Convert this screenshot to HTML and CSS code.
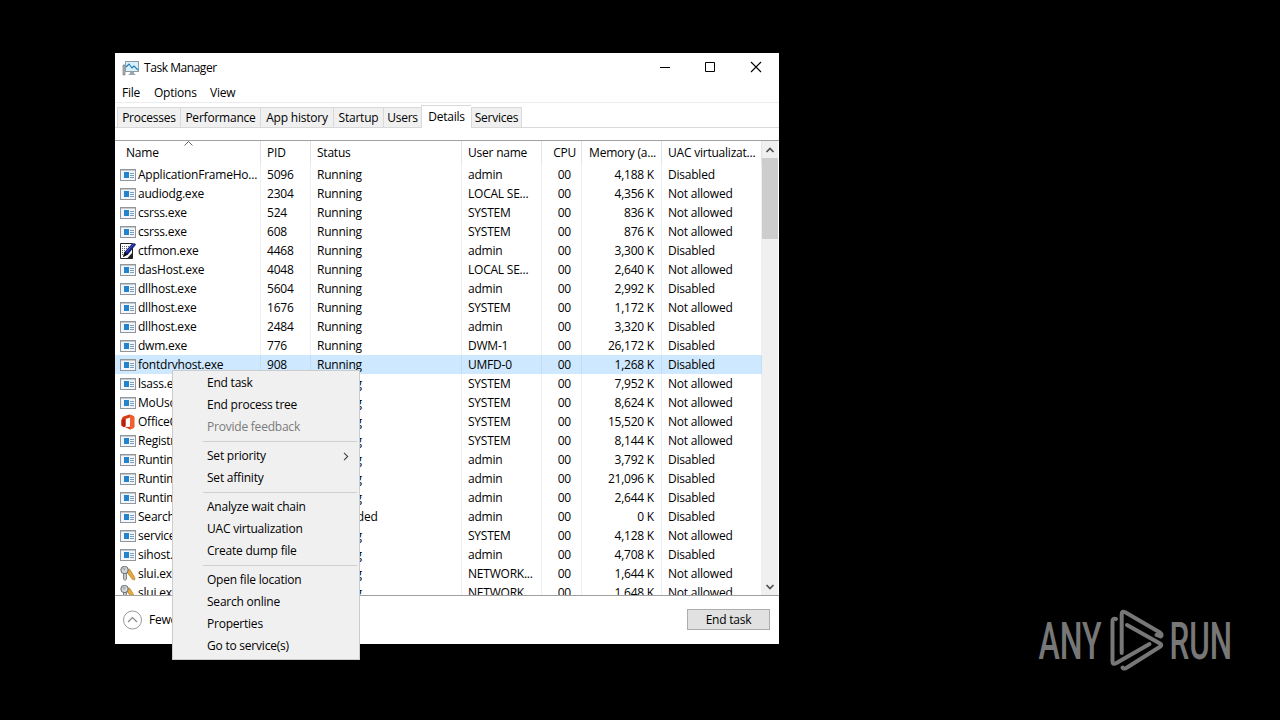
FILE: index.html
```html
<!DOCTYPE html>
<html lang="en">
<head>
<meta charset="utf-8">
<title>Task Manager</title>
<link rel="stylesheet" href="styles.css">
</head>
<body>
<svg class="defs" width="0" height="0">
  <symbol id="exe" viewBox="0 0 16 16">
    <rect x=".5" y="2.500" width="15" height="11" fill="#f2f6fa" stroke="#8f969c"/>
    <rect x="1" y="3" width="14" height="1" fill="#c4cad0"/>
    <rect x="4" y="5" width="5" height="6" fill="#2583cb"/>
    <path d="M10 6.500h4M10 8.500h4M10 10.500h4" stroke="#7d9fbd"/>
  </symbol>
  <symbol id="pen" viewBox="0 0 16 16">
    <path d="M.5.500h12v15H.5z" fill="#fff" stroke="#222"/>
    <path d="M2 3.500h9M2 5.500h9M2 7.500h7M2 9.500h5M2 11.500h3" stroke="#666" stroke-dasharray="1 1"/>
    <path d="M3 14l1.500-5L12 .8q2.500-1.300 4 .7L8 11.500z" fill="#12207f"/>
    <path d="M3 14l1.500-5 3.500 2.500z" fill="#111"/><path d="M6.500 9L13.500 1.500" stroke="#4c65d1"/>
    <path d="M7 15.500l5.500-6v6z" fill="#222"/>
  </symbol>
  <symbol id="office" viewBox="0 0 16 16">
    <path d="M9.500.5L3.500 2.500Q1.500 3.500 1.500 6v5.500l2.500 1.700 1.500-1V5L10 3.500v9.300l-5 .3 5 2.400 3.500-1.500q.8-.5.8-1.500V3.500q0-1-.8-1.500z" fill="#dc3a12"/>
    <path d="M10 .7l3.500 1.500q.8.4.8 1.400v9q0 1-.8 1.400L10 15.500z" fill="#f0602e"/>
    <path d="M1.500 6v5.500l2.500 1.700 1.500-1V5z" fill="#b8200b"/>
  </symbol>
  <symbol id="keys" viewBox="0 0 16 16">
    <path d="M7 2.500l3 1 5 8.500-.5 2-2-.5L7.500 7z" fill="#e5a83a" stroke="#a87524" stroke-width=".6"/>
    <circle cx="4.500" cy="4" r="3.700" fill="#d5d8da" stroke="#656b70"/>
    <circle cx="4" cy="3" r="1" fill="#fff" stroke="#656b70" stroke-width=".6"/>
    <path d="M3.500 7.500h3v5.500L5 14.500 3.500 13z" fill="#c5c9cc" stroke="#656b70" stroke-width=".8"/>
  </symbol>
</svg>

<main class="window">
  <header class="titlebar">
    <svg class="app-icon" width="17" height="16" viewBox="0 0 17 16">
      <path d="M1 5h2v10H1z" fill="#b6bcc1" stroke="#70777d" stroke-width=".7"/>
      <rect x="3.500" y="1.500" width="13" height="10" fill="#d5effb" stroke="#929ba2"/>
      <path d="M4 7l3-3 3 4 2-2 4 4" fill="none" stroke="#1c7eb5" stroke-width="1.100"/>
      <path d="M8 12h4v1.500l2 1.500H6l2-1.500z" fill="#9ba5ac"/>
    </svg>
    <h1 class="title">Task Manager</h1>
    <svg class="controls" width="138" height="30" viewBox="0 0 138 30">
      <path d="M19 14.500h10M64.500 9.500h9v9h-9z" fill="none" stroke="#000"/>
      <path d="M110 9l10 10M120 9l-10 10" fill="none" stroke="#000" stroke-width="1.100"/>
    </svg>
  </header>
  <nav class="menubar"><span class="mi-file">File</span><span class="mi-options">Options</span><span>View</span></nav>
  <div class="tabs">
    <span class="tab t-processes">Processes</span><span class="tab t-performance">Performance</span><span class="tab t-history">App history</span><span class="tab t-startup">Startup</span><span class="tab t-users">Users</span><span class="tab t-details active">Details</span><span class="tab t-services">Services</span>
  </div>
  <section class="list">
    <div class="table">
      <div class="row head"><span class="name">Name<svg class="sort" width="9" height="5" viewBox="0 0 9 5"><path d="M.5 4.500l4-4 4 4" fill="none" stroke="#555" stroke-width=".9"/></svg></span><span>PID</span><span>Status</span><span>User name</span><span class="num">CPU</span><span class="num">Memory (a...</span><span>UAC virtualizat...</span></div>
      <div class="row"><span class="name"><svg class="icon"><use href="#exe"/></svg>ApplicationFrameHo...</span><span>5096</span><span>Running</span><span>admin</span><span class="num cpu">00</span><span class="num">4,188 K</span><span>Disabled</span></div>
      <div class="row"><span class="name"><svg class="icon"><use href="#exe"/></svg>audiodg.exe</span><span>2304</span><span>Running</span><span>LOCAL SE...</span><span class="num cpu">00</span><span class="num">4,356 K</span><span>Not allowed</span></div>
      <div class="row"><span class="name"><svg class="icon"><use href="#exe"/></svg>csrss.exe</span><span>524</span><span>Running</span><span>SYSTEM</span><span class="num cpu">00</span><span class="num">836 K</span><span>Not allowed</span></div>
      <div class="row"><span class="name"><svg class="icon"><use href="#exe"/></svg>csrss.exe</span><span>608</span><span>Running</span><span>SYSTEM</span><span class="num cpu">00</span><span class="num">876 K</span><span>Not allowed</span></div>
      <div class="row"><span class="name"><svg class="icon"><use href="#pen"/></svg>ctfmon.exe</span><span>4468</span><span>Running</span><span>admin</span><span class="num cpu">00</span><span class="num">3,300 K</span><span>Disabled</span></div>
      <div class="row"><span class="name"><svg class="icon"><use href="#exe"/></svg>dasHost.exe</span><span>4048</span><span>Running</span><span>LOCAL SE...</span><span class="num cpu">00</span><span class="num">2,640 K</span><span>Not allowed</span></div>
      <div class="row"><span class="name"><svg class="icon"><use href="#exe"/></svg>dllhost.exe</span><span>5604</span><span>Running</span><span>admin</span><span class="num cpu">00</span><span class="num">2,992 K</span><span>Disabled</span></div>
      <div class="row"><span class="name"><svg class="icon"><use href="#exe"/></svg>dllhost.exe</span><span>1676</span><span>Running</span><span>SYSTEM</span><span class="num cpu">00</span><span class="num">1,172 K</span><span>Not allowed</span></div>
      <div class="row"><span class="name"><svg class="icon"><use href="#exe"/></svg>dllhost.exe</span><span>2484</span><span>Running</span><span>admin</span><span class="num cpu">00</span><span class="num">3,320 K</span><span>Disabled</span></div>
      <div class="row"><span class="name"><svg class="icon"><use href="#exe"/></svg>dwm.exe</span><span>776</span><span>Running</span><span>DWM-1</span><span class="num cpu">00</span><span class="num">26,172 K</span><span>Disabled</span></div>
      <div class="row selected"><span class="name"><svg class="icon"><use href="#exe"/></svg>fontdrvhost.exe</span><span>908</span><span>Running</span><span>UMFD-0</span><span class="num cpu">00</span><span class="num">1,268 K</span><span>Disabled</span></div>
      <div class="row"><span class="name"><svg class="icon"><use href="#exe"/></svg>lsass.exe</span><span></span><span>Running</span><span>SYSTEM</span><span class="num cpu">00</span><span class="num">7,952 K</span><span>Not allowed</span></div>
      <div class="row"><span class="name"><svg class="icon"><use href="#exe"/></svg>MoUso</span><span></span><span>Running</span><span>SYSTEM</span><span class="num cpu">00</span><span class="num">8,624 K</span><span>Not allowed</span></div>
      <div class="row"><span class="name"><svg class="icon"><use href="#office"/></svg>OfficeC</span><span></span><span>Running</span><span>SYSTEM</span><span class="num cpu">00</span><span class="num">15,520 K</span><span>Not allowed</span></div>
      <div class="row"><span class="name"><svg class="icon"><use href="#exe"/></svg>Registry</span><span></span><span>Running</span><span>SYSTEM</span><span class="num cpu">00</span><span class="num">8,144 K</span><span>Not allowed</span></div>
      <div class="row"><span class="name"><svg class="icon"><use href="#exe"/></svg>Runtime</span><span></span><span>Running</span><span>admin</span><span class="num cpu">00</span><span class="num">3,792 K</span><span>Disabled</span></div>
      <div class="row"><span class="name"><svg class="icon"><use href="#exe"/></svg>Runtime</span><span></span><span>Running</span><span>admin</span><span class="num cpu">00</span><span class="num">21,096 K</span><span>Disabled</span></div>
      <div class="row"><span class="name"><svg class="icon"><use href="#exe"/></svg>Runtime</span><span></span><span>Running</span><span>admin</span><span class="num cpu">00</span><span class="num">2,644 K</span><span>Disabled</span></div>
      <div class="row"><span class="name"><svg class="icon"><use href="#exe"/></svg>Search</span><span></span><span>Suspended</span><span>admin</span><span class="num cpu">00</span><span class="num">0 K</span><span>Disabled</span></div>
      <div class="row"><span class="name"><svg class="icon"><use href="#exe"/></svg>services</span><span></span><span>Running</span><span>SYSTEM</span><span class="num cpu">00</span><span class="num">4,128 K</span><span>Not allowed</span></div>
      <div class="row"><span class="name"><svg class="icon"><use href="#exe"/></svg>sihost.exe</span><span></span><span>Running</span><span>admin</span><span class="num cpu">00</span><span class="num">4,708 K</span><span>Disabled</span></div>
      <div class="row"><span class="name"><svg class="icon"><use href="#keys"/></svg>slui.exe</span><span></span><span>Running</span><span>NETWORK...</span><span class="num cpu">00</span><span class="num">1,644 K</span><span>Not allowed</span></div>
      <div class="row"><span class="name"><svg class="icon"><use href="#keys"/></svg>slui.exe</span><span></span><span>Running</span><span>NETWORK...</span><span class="num cpu">00</span><span class="num">1,648 K</span><span>Not allowed</span></div>
    </div>
    <div class="scrollbar">
      <svg width="16" height="17" viewBox="0 0 16 17"><path d="M4.500 11L8 7.500l3.500 3.500" fill="none" stroke="#505050" stroke-width="1.700"/></svg>
      <div class="thumb"></div>
      <svg class="down" width="16" height="17" viewBox="0 0 16 17"><path d="M4.500 7L8 10.500 11.500 7" fill="none" stroke="#505050" stroke-width="1.700"/></svg>
    </div>
  </section>
  <footer class="footer">
    <svg width="20" height="20" viewBox="0 0 20 20"><circle cx="10.500" cy="10" r="9" fill="none" stroke="#999"/><path d="M6 12l4.500-4.500L15 12" fill="none" stroke="#888" stroke-width="1.200"/></svg>
    <span class="fewer">Fewer</span>
    <button class="end-button">End task</button>
  </footer>
</main>

<div class="context-menu">
  <div class="item">End task</div>
  <div class="item">End process tree</div>
  <div class="item disabled">Provide feedback</div>
  <div class="separator"></div>
  <div class="item">Set priority<svg class="arrow" width="6" height="9" viewBox="0 0 6 9"><path d="M1 .8l3.700 3.700L1 8.200" fill="none" stroke="#444" stroke-width="1.100"/></svg></div>
  <div class="item">Set affinity</div>
  <div class="separator"></div>
  <div class="item">Analyze wait chain</div>
  <div class="item">UAC virtualization</div>
  <div class="item">Create dump file</div>
  <div class="separator"></div>
  <div class="item">Open file location</div>
  <div class="item">Search online</div>
  <div class="item">Properties</div>
  <div class="item">Go to service(s)</div>
</div>

<svg class="watermark" width="210" height="80" viewBox="0 0 210 80">
  <g class="brand">
    <text transform="translate(8.500 59) scale(.62 1)" textLength="102" lengthAdjust="spacingAndGlyphs">ANY</text>
    <text transform="translate(139.500 59) scale(.62 1)" textLength="101" lengthAdjust="spacingAndGlyphs">RUN</text>
  </g>
  <g fill="none" stroke="#777" stroke-width="4" stroke-linecap="round" stroke-linejoin="round">
    <path d="M91.700 53V14q0-3.500 3.500-1.800L130 32.500q3 2.500.5 4l-4-1.500"/>
    <path d="M86 19q-3.500-1-3.500 2.500v40q0 3.500 3.500 1.800L119.500 44"/>
    <path d="M97 25l33 18.500q2.500 1.700 0 3.200L97 67.500q-3 2-4.500 0"/>
  </g>
</svg>
</body>
</html>
```
FILE: styles.css
```css
* { box-sizing: border-box; }
body { margin: 0; padding: 53px 0 0 115px; width: 1280px; height: 720px; overflow: hidden; background: #000; color: #000; font: 12px/16px "Open Sans", "Noto Sans", sans-serif; letter-spacing: -.22px; }
.defs { position: absolute; }
.window { width: 664px; height: 591px; background: #fff; display: flex; flex-direction: column; overflow: hidden; }
.titlebar { height: 30px; flex: none; display: flex; align-items: center; padding-left: 7px; }
.app-icon { margin-right: 5px; }
.title { margin: 0; font-size: 12px; font-weight: 400; letter-spacing: -.45px; }
.controls { margin-left: auto; }
.menubar { height: 20px; flex: none; display: flex; align-items: center; padding-left: 7px; border-bottom: 1px solid #ececec; }
.mi-file { width: 32px; }
.mi-options { width: 56px; }
.tabs { height: 25px; flex: none; display: flex; align-items: flex-end; padding-left: 2px; border-bottom: 1px solid #d9d9d9; }
.tab { height: 20px; border: 1px solid #d9d9d9; border-right: 0; border-bottom: 0; background: #f0f0f0; text-align: center; line-height: 19px; white-space: nowrap; }
.t-processes { width: 63px; }
.t-performance { width: 80px; }
.t-history { width: 73px; }
.t-startup { width: 50px; }
.t-users { width: 38px; }
.t-details { width: 50px; }
.t-services { width: 51px; border-right: 1px solid #d9d9d9; }
.active { height: 23px; margin-bottom: -1px; background: #fff; line-height: 21px; }
.list { margin-top: 12px; height: 456px; flex: none; display: flex; border-top: 1px solid #a0a0a0; border-bottom: 1px solid #a0a0a0; overflow: hidden; }
.table { width: 647px; }
.row { display: grid; grid-template-columns: 146px 50px 151px 80px 40px 80px 100px; height: 19px; line-height: 19px; white-space: nowrap; }
.row > span { padding-left: 6px; border-right: 1px solid #edf1f5; }
.row > .num { padding: 0 7px 0 0; text-align: right; }
.row > .cpu { padding-right: 10px; }
.row > .name { display: flex; align-items: center; padding-left: 5px; }
.icon { width: 16px; height: 16px; margin-right: 2px; flex: none; }
.head { height: 24px; line-height: 24px; }
.head > span { border-color: #e4e4e4; }
.row.head > .name { position: relative; padding-left: 11px; }
.row.head > .num { padding-right: 5px; }
.sort { position: absolute; left: 69px; top: 0; }
.selected { background: #cde8ff; }
.selected > span { border-color: #c2def5; }
.scrollbar { width: 16px; background: #f0f0f0; display: flex; flex-direction: column; }
.scrollbar svg { flex: none; }
.thumb { height: 81px; flex: none; background: #cdcdcd; }
.down { margin-top: auto; }
.footer { height: 48px; display: flex; align-items: center; padding: 0 9px 1px 7px; }
.fewer { margin-left: 7px; }
.end-button { margin-left: auto; width: 83px; height: 21px; padding: 0; border: 1px solid #adadad; background: #e1e1e1; color: #000; font: inherit; letter-spacing: inherit; }
.context-menu { position: absolute; left: 172px; top: 370px; width: 188px; height: 290px; background: #f0f0f0; border: 1px solid #ccc; padding: 1px 2px; }
.item { height: 22px; line-height: 22px; padding-left: 32px; display: flex; align-items: center; }
.disabled { color: #7b7b7b; }
.separator { height: 7px; margin-left: 28px; padding-top: 3px; }
.separator::before { content: ""; display: block; height: 1px; background: #d0d0d0; }
.arrow { margin-left: auto; margin-right: 8px; }
.watermark { position: absolute; left: 1030px; top: 600px; }
.brand { fill: #777; font: 500 52px Roboto, sans-serif; letter-spacing: 0; }
```
